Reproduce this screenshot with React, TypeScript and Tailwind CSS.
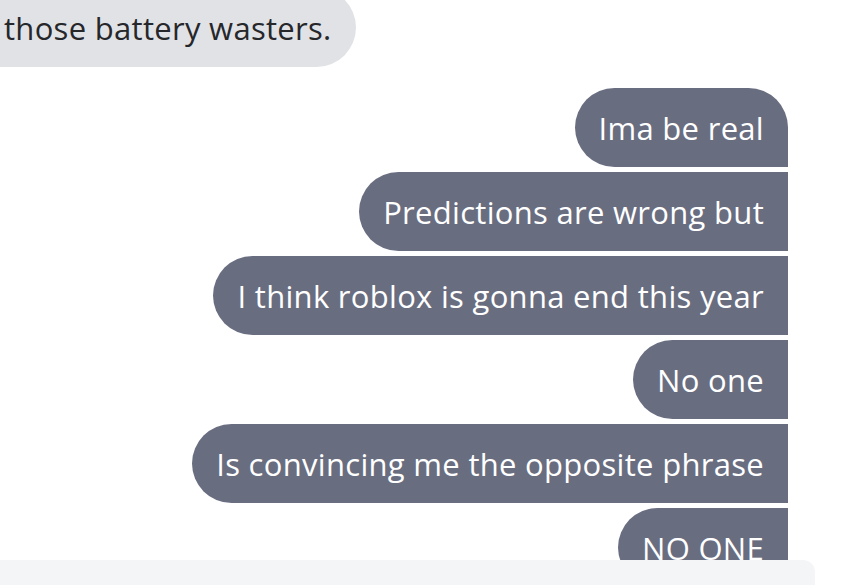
export default function App() {
  const mine = [
    'Ima be real',
    'Predictions are wrong but',
    'I think roblox is gonna end this year',
    'No one',
    'Is convincing me the opposite phrase',
    'NO ONE',
  ];

  return (
    <div
      className="relative h-[585px] w-[842px] overflow-hidden bg-white text-[31px] tracking-[0.3px]"
      style={{ fontFamily: '"Open Sans", sans-serif' }}
    >
      {/* THEIR MESSAGE */}
      <div className="-mt-[12px] -ml-[22px] flex">
        <div className="flex h-[79px] items-center rounded-r-[40px] bg-[#e1e2e6] pt-[2px] pl-[26px] pr-[24px] text-[#26272b]">
          those battery wasters.
        </div>
      </div>

      {/* MY MESSAGES */}
      <div className="mt-[21px] mr-[54px] flex flex-col items-end gap-[5px]">
        {mine.map((m, i) => (
          <div
            key={i}
            className={
              i === 0
                ? 'flex h-[79px] items-center whitespace-nowrap rounded-l-[40px] rounded-tr-[40px] bg-[#696d80] pt-[2px] pl-[24px] pr-[24px] text-white'
                : 'flex h-[79px] items-center whitespace-nowrap rounded-l-[40px] bg-[#696d80] pt-[2px] pl-[24px] pr-[24px] text-white'
            }
          >
            {m}
          </div>
        ))}
      </div>

      {/* INPUT BAR */}
      <div className="absolute bottom-0 left-0 h-[25px] w-[815px] rounded-tr-[12px] bg-[#f4f5f7]" />
    </div>
  );
}
